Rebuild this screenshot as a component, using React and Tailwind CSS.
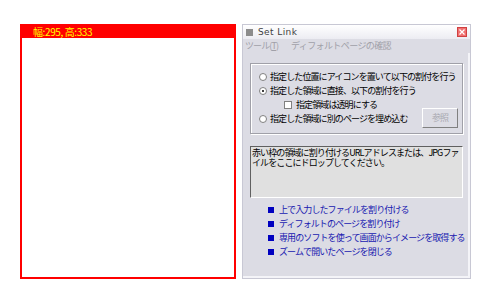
import React from "react";

const jp = { fontFamily: '"Noto Sans CJK JP", "Noto Sans", sans-serif' };

function Radio({ checked }) {
  return (
    <span className="relative inline-block w-[8px] h-[8px] rounded-full bg-white border border-[#808080] shrink-0">
      {checked && <span className="absolute left-[2px] top-[2px] w-[2px] h-[2px] rounded-full bg-black" />}
    </span>
  );
}

function Link({ children }) {
  return (
    <div className="flex items-center h-[14px] whitespace-nowrap">
      <span className="w-[6px] h-[6px] bg-[#0000c0] mr-[5px] shrink-0" />
      <span className="text-[#1818b0]">{children}</span>
    </div>
  );
}

export default function App() {
  return (
    <div className="w-[490px] h-[305px] bg-white flex pt-[24px] pl-[20px] text-[9px] leading-[12px] tracking-[-0.9px]" style={jp}>
      <div className="w-[216px] h-[255px] border-2 border-[#ff0000] flex flex-col">
        <div className="h-[12px] bg-[#ff0000] text-[#ffff00] text-[10px] leading-[12px] pl-[11px] tracking-[-0.4px] whitespace-pre">
          幅:295, 高:333
        </div>
      </div>
      <div className="ml-[6px] w-[229px] h-[255px] bg-[#dcdce4] border border-[#c8c8d4] flex flex-col text-[#000]">
        <div className="h-[14px] bg-gradient-to-b from-white to-[#ececf2] flex items-center pl-[3px] pr-[2px]">
          <span className="w-[7px] h-[7px] bg-[#8c8c8c] mr-[5px]" />
          <span className="text-[#404040] text-[9px] tracking-[0.4px]" style={{ fontFamily: '"DejaVu Sans", sans-serif' }}>Set Link</span>
          <span className="ml-auto mr-[1px] w-[10px] h-[10px] bg-[#f07070] border border-[#d04040] flex items-center justify-center">
            <svg width="6" height="6" viewBox="0 0 6 6"><path d="M0.5 0.5L5.5 5.5M5.5 0.5L0.5 5.5" stroke="#fff" strokeWidth="1.2" /></svg>
          </span>
        </div>
        <div className="h-[14px] flex items-center pl-[2px] text-[#a0a0a8] whitespace-nowrap">
          <span className="w-[46px]">ツール(<span className="underline">T</span>)</span>
          <span className="tracking-[-0.6px]">ディフォルトページの確認</span>
        </div>
        <div className="flex-1 border-r-2 border-b-2 border-[#f4f4f8] pr-[5px] pl-[7px] pt-[10px]">
          <div className="h-[71px] border border-[#a0a0a8] shadow-[inset_1px_1px_0_#fff,1px_1px_0_#fff] relative pt-[6px] pl-[8px] whitespace-nowrap">
            <div className="flex items-center h-[14px] gap-[3px]"><Radio /><span>指定した位置にアイコンを置いて以下の割付を行う</span></div>
            <div className="flex items-center h-[14px] gap-[3px]"><Radio checked /><span>指定した領域に直接、以下の割付を行う</span></div>
            <div className="flex items-center h-[14px] gap-[4px] pl-[25px]">
              <span className="w-[8px] h-[8px] bg-white border border-[#808080]" />
              <span>指定領域は透明にする</span>
            </div>
            <div className="flex items-center h-[14px] gap-[3px]"><Radio /><span>指定した領域に別のページを埋め込む</span></div>
            <div className="absolute right-[4px] top-[44px] w-[36px] h-[20px] border border-t-white border-l-white border-r-[#808080] border-b-[#808080] bg-[#dcdce4] flex items-center justify-center text-[#a8a8b0]">
              参照
            </div>
          </div>
          <div className="mt-[12px] h-[52px] bg-[#e0e0e0] border border-t-[#606060] border-l-[#606060] border-r-white border-b-white pl-[1px] pt-[1px] leading-[10px]">
            赤い枠の領域に割り付けるURLアドレスまたは、JPGファイルをここにドロップしてください。
          </div>
          <div className="pl-[18px] pt-[5px]">
            <Link>上で入力したファイルを割り付ける</Link>
            <Link>ディフォルトのページを割り付け</Link>
            <Link>専用のソフトを使って画面からイメージを取得する</Link>
            <Link>ズームで開いたページを閉じる</Link>
          </div>
        </div>
      </div>
    </div>
  );
}
